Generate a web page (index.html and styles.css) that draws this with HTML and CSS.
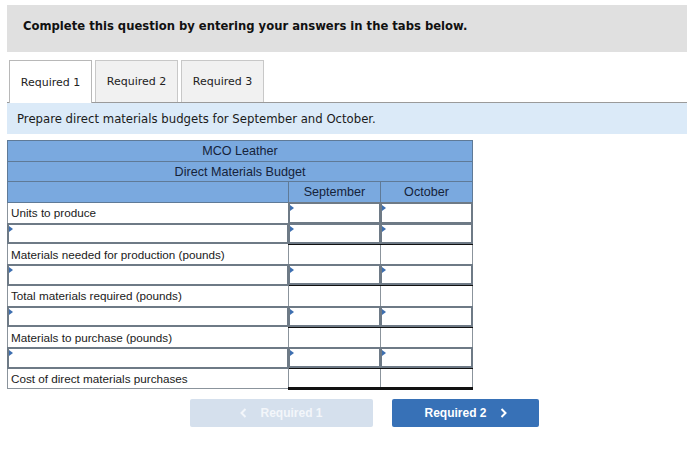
FILE: index.html
```html
<!DOCTYPE html>
<html>
<head>
<meta charset="utf-8">
<link rel="stylesheet" href="styles.css">
</head>
<body>
<div class="banner">Complete this question by entering your answers in the tabs below.</div>
<div class="tabs">
  <div class="tab active">Required 1</div>
  <div class="tab">Required 2</div>
  <div class="tab">Required 3</div>
</div>
<div class="prompt">Prepare direct materials budgets for September and October.</div>
<table class="budget">
  <colgroup><col class="c-label"><col class="c-val"><col class="c-val"></colgroup>
  <tr class="hd"><td colspan="3">MCO Leather</td></tr>
  <tr class="hd"><td colspan="3">Direct Materials Budget</td></tr>
  <tr class="hd"><td></td><td>September</td><td>October</td></tr>
  <tr><td class="label">Units to produce</td><td class="in"><div class="box"></div></td><td class="in"><div class="box"></div></td></tr>
  <tr><td class="in"><div class="box"></div></td><td class="in"><div class="box"></div></td><td class="in"><div class="box"></div></td></tr>
  <tr><td class="label">Materials needed for production (pounds)</td><td class="tot"></td><td class="tot"></td></tr>
  <tr><td class="in"><div class="box"></div></td><td class="in"><div class="box"></div></td><td class="in"><div class="box"></div></td></tr>
  <tr><td class="label">Total materials required (pounds)</td><td class="tot"></td><td class="tot"></td></tr>
  <tr><td class="in"><div class="box"></div></td><td class="in"><div class="box"></div></td><td class="in"><div class="box"></div></td></tr>
  <tr><td class="label">Materials to purchase (pounds)</td><td class="tot"></td><td class="tot"></td></tr>
  <tr><td class="in"><div class="box"></div></td><td class="in"><div class="box"></div></td><td class="in"><div class="box"></div></td></tr>
  <tr><td class="label">Cost of direct materials purchases</td><td class="tot final"></td><td class="tot final"></td></tr>
</table>
<div class="nav">
  <div class="btn prev"><svg class="chev" width="7" height="10" viewBox="0 0 7 10"><polyline points="5.5,1 1.5,5 5.5,9" fill="none" stroke="currentColor" stroke-width="2"/></svg>Required 1</div>
  <div class="btn next">Required 2<svg class="chev" width="7" height="10" viewBox="0 0 7 10"><polyline points="1.5,1 5.5,5 1.5,9" fill="none" stroke="currentColor" stroke-width="2"/></svg></div>
</div>
</body>
</html>
```
FILE: styles.css
```css
html, body { margin: 0; padding: 0; background: #fff; }
body { font-family: "DejaVu Sans", Verdana, sans-serif; color: #1a1a1a; }

.banner {
  margin: 5px 0 0 7px;
  height: 47px;
  background: #e0e0e0;
  padding: 0 0 6px 16px;
  display: flex;
  align-items: center;
  font-size: 11.6px;
  font-weight: bold;
  color: #111;
  box-sizing: border-box;
}

.tabs {
  margin: 8px 0 0 7px;
  padding-left: 2px;
  display: flex;
  gap: 3px;
  border-bottom: 1px solid #9a9a9a;
  height: 42px;
}
.tab {
  width: 83px;
  height: 42px;
  box-sizing: border-box;
  border: 1px solid #c8c8c8;
  border-bottom: none;
  background: #f1f1f1;
  font-size: 11px;
  color: #222;
  display: flex;
  align-items: center;
  justify-content: center;
}
.tab.active {
  background: #fff;
  height: 43px;
  border-color: #b8b8b8;
}

.prompt {
  margin-left: 7px;
  height: 31px;
  background: #dbeaf8;
  padding-left: 10px;
  display: flex;
  align-items: center;
  font-size: 11.7px;
  color: #1a1a1a;
}

.budget {
  margin: 6px 0 0 7px;
  border-collapse: collapse;
  width: 466px;
  table-layout: fixed;
  font-family: "Liberation Sans", Arial, sans-serif;
  font-size: 11.7px;
}
.c-label { width: 281px; }
.c-val { width: 92px; }
.budget td {
  border: 1px solid #8b949c;
  height: 20.7px;
  padding: 0;
  box-sizing: border-box;
}
.budget tr.hd td {
  background: #7aa9df;
  border-color: #5f7a97;
  text-align: center;
  color: #15233a;
  font-size: 12.6px;
}
.budget td.label { padding-left: 3px; color: #1a1a1a; }
.budget td.in { position: relative; }
.box {
  position: absolute;
  inset: -1px;
  border: 2px solid #6e7a86;
}
.box::before {
  content: "";
  position: absolute;
  left: 0;
  top: 1px;
  border-top: 3px solid transparent;
  border-bottom: 3px solid transparent;
  border-left: 4px solid #3e6fb0;
}
.budget td.tot { border-top: 2px solid #111; }
.budget td.tot.final { border-bottom: 3px solid #111; }

.nav {
  margin: 9px 0 0 190px;
  display: flex;
  gap: 19px;
}
.btn {
  height: 28px;
  border-radius: 2px;
  font-family: "Liberation Sans", Arial, sans-serif;
  font-weight: bold;
  font-size: 12px;
  display: flex;
  align-items: center;
  justify-content: center;
  color: #fff;
}
.btn.prev { width: 183px; background: #d5e0ed; color: #f3f6fa; }
.btn.next { width: 147px; background: #3771b7; }
.chev { display: block; }
.prev .chev { margin-right: 13px; }
.next .chev { margin-left: 13px; }
```
